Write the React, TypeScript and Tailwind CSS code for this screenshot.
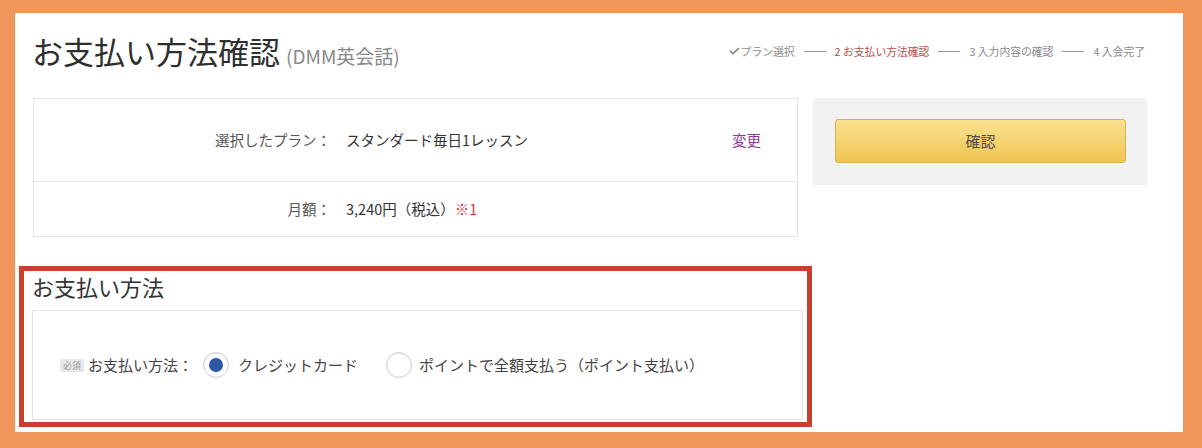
import { ReactNode } from "react";

const font = { fontFamily: '"Noto Sans CJK JP", "Noto Sans", sans-serif' };

function Steps() {
  const line = <span className="mx-[9px] inline-block h-px w-[22px] bg-[#999]" />;
  return (
    <div className="flex items-center text-[10.8px] text-[#8a8a8a]">
      <svg width="11" height="8" viewBox="0 0 11 8" className="mr-[1px]">
        <path d="M1 3.8 L4 6.6 L10 1.2" fill="none" stroke="#8a8a8a" strokeWidth="1.8" />
      </svg>
      <span>プラン選択</span>
      {line}
      <span className="text-[#b8514b]">2&nbsp;お支払い方法確認</span>
      {line}
      <span>3&nbsp;入力内容の確認</span>
      {line}
      <span>4&nbsp;入会完了</span>
    </div>
  );
}

function Row({ label, children, right, h }: { label: string; children: ReactNode; right?: ReactNode; h: string }) {
  return (
    <div className={`flex items-center ${h} text-[14.5px]`}>
      <div className="w-[297px] text-right text-[#555]">{label}</div>
      <div className="flex-1 pl-[15px] text-[#333]">{children}</div>
      {right ? <div className="pr-[36px]">{right}</div> : null}
    </div>
  );
}

function Radio({ checked }: { checked?: boolean }) {
  return (
    <span className="flex h-[26px] w-[26px] items-center justify-center rounded-full border border-[#cfcfcf] bg-white shadow-[inset_0_1px_2px_rgba(0,0,0,0.08)]">
      {checked ? <span className="h-[14px] w-[14px] rounded-full bg-[#2e57a6]" /> : null}
    </span>
  );
}

export default function App() {
  return (
    <div style={font} className="h-[448px] w-[1202px] bg-[#f0965a] pb-[16px] pl-[15px] pr-[19px] pt-[13px]">
      <div className="h-full bg-white">
        <div className="flex h-[85px] items-start justify-between pl-[17px] pr-[38px] pt-[19px]">
          <div className="flex items-baseline">
            <span className="text-[31px] leading-[38px] text-[#2e2e2e]">お支払い方法確認</span>
            <span className="ml-[6px] text-[19px] text-[#888]">(DMM英会話)</span>
          </div>
          <div className="pt-[11px]">
            <Steps />
          </div>
        </div>

        <div className="flex gap-[15px] pl-[18px]">
          <div className="w-[765px]">
            <div className="border border-[#e4e4e4]">
              <Row
                label="選択したプラン："
                h="h-[82px]"
                right={<span className="text-[14.5px] text-[#8e3b97]">変更</span>}
              >
                スタンダード毎日1レッスン
              </Row>
              <div className="border-t border-[#e4e4e4]">
                <Row label="月額：" h="h-[54px]">
                  3,240円（税込）<span className="text-[#d9363e]">※1</span>
                </Row>
              </div>
            </div>

            <div className="-ml-[14px] mt-[29px] h-[161px] w-[793px] border-[5px] border-[#c8402e]">
              <div className="h-[39px] pl-[8px] text-[22px] leading-[30px] text-[#333]">お支払い方法</div>
              <div className="ml-[8px] mr-[4px] flex h-[110px] items-center border border-[#e4e4e4] pl-[27px] text-[15px] text-[#444] shadow-[0_1px_2px_rgba(0,0,0,0.05)]">
                <span className="mr-[4px] bg-[#e9e9e9] px-[3px] text-[9px] leading-[13px] text-[#999]">必須</span>
                <span>お支払い方法：</span>
                <span className="ml-[10px] flex items-center gap-[9px]">
                  <Radio checked />
                  <span>クレジットカード</span>
                </span>
                <span className="ml-[28px] flex items-center gap-[7px]">
                  <Radio />
                  <span>ポイントで全額支払う（ポイント支払い）</span>
                </span>
              </div>
            </div>
          </div>

          <div className="h-[87px] w-[334px] bg-[#f2f2f2] px-[22px] py-[21px]">
            <button className="flex h-[44px] w-[291px] items-center justify-center rounded-[3px] border border-[#d6b14f] bg-gradient-to-b from-[#fae28e] to-[#f0c450] text-[15px] text-[#4a4a4a]">
              確認
            </button>
          </div>
        </div>
      </div>
    </div>
  );
}
